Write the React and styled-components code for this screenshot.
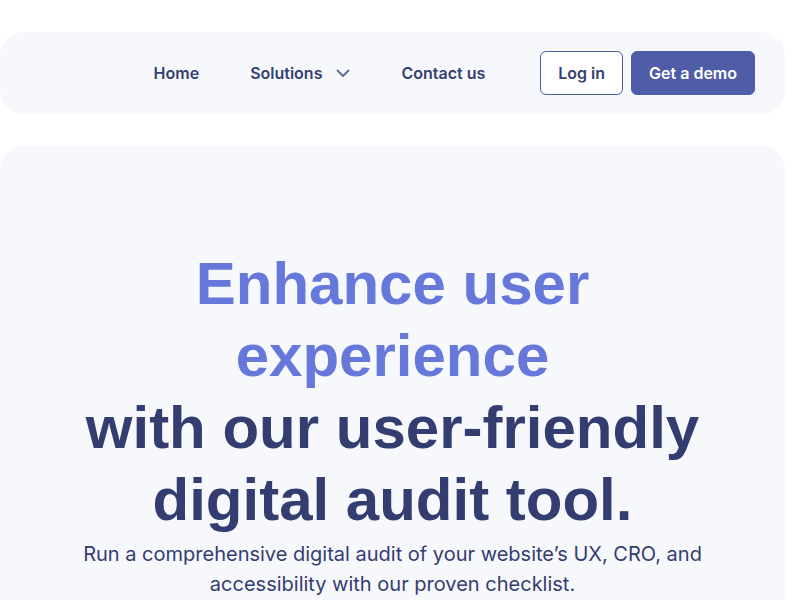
import React from 'react';
import styled, { createGlobalStyle } from 'styled-components';

const GlobalStyle = createGlobalStyle`
  html, body {
    margin: 0;
    padding: 0;
    background: #ffffff;
  }
  body {
    font-family: Inter, "Noto Sans", sans-serif;
    color: #343d70;
  }
  * {
    box-sizing: border-box;
  }
  ::-webkit-scrollbar {
    width: 15px;
    height: 15px;
    background: #f1f1f1;
  }
  ::-webkit-scrollbar-thumb {
    background: #c1c1c1;
    border: 2px solid #f1f1f1;
  }
  ::-webkit-scrollbar-corner {
    background: #dcdcdc;
  }
`;

const Chevron = () => (
  <svg width="14" height="9" viewBox="0 0 14 9" fill="none">
    <path d="M1.5 1.5l5.5 5.5 5.5-5.5" stroke="#5b6591" strokeWidth="1.8" strokeLinecap="round" strokeLinejoin="round" />
  </svg>
);

const App = () => {
  return (
    <>
      <GlobalStyle />
      <Page>
        <NavBar>
          <Links>
            <NavLink href="#">Home</NavLink>
            <NavLink href="#" as="button">
              Solutions
              <Chevron />
            </NavLink>
            <NavLink href="#">Contact us</NavLink>
          </Links>
          <Actions>
            <Button>Log in</Button>
            <Button primary>Get a demo</Button>
          </Actions>
        </NavBar>

        <Hero>
          <Title>
            <Accent>Enhance user experience</Accent>
            <br />
            with our user-friendly digital audit tool.
          </Title>
          <Lead>
            Run a comprehensive digital audit of your website’s UX, CRO, and
            accessibility with our proven checklist.
          </Lead>
        </Hero>
      </Page>
    </>
  );
};

const Page = styled.div`
  width: 805px;
  min-height: 8800px;
  padding: 32px 20px 0 0;
  display: flex;
  flex-direction: column;
  gap: 32px;
`;

const NavBar = styled.nav`
  height: 82px;
  background: #f7f8fc;
  border-radius: 24px;
  display: flex;
  align-items: center;
  justify-content: flex-end;
  padding: 0 30px;
`;

const Links = styled.div`
  display: flex;
  align-items: center;
  gap: 51px;
  margin-right: 55px;
`;

const NavLink = styled.a`
  display: flex;
  align-items: center;
  gap: 14px;
  font-family: Inter, "Noto Sans", sans-serif;
  font-size: 16px;
  font-weight: 600;
  color: #343f72;
  text-decoration: none;
  background: none;
  border: none;
  padding: 0;
  cursor: pointer;
`;

const Actions = styled.div`
  display: flex;
  align-items: center;
  gap: 8px;
`;

const Button = styled.button`
  height: 44px;
  padding: 0 17px;
  border-radius: 6px;
  font-family: Inter, "Noto Sans", sans-serif;
  font-size: 16px;
  font-weight: 600;
  cursor: pointer;
  border: 1px solid #4f5ca8;
  background: ${(p) => (p.primary ? '#4f5ca8' : '#ffffff')};
  color: ${(p) => (p.primary ? '#ffffff' : '#343f72')};
`;

const Hero = styled.section`
  flex: 1;
  background: #f7f8fc;
  border-radius: 24px;
  padding: 102px 40px 0;
  display: flex;
  flex-direction: column;
  align-items: center;
  text-align: center;
`;

const Title = styled.h1`
  margin: 0;
  max-width: 660px;
  font-family: "Liberation Sans", Arial, sans-serif;
  font-size: 60px;
  line-height: 72px;
  font-weight: 700;
  color: #343d70;
`;

const Accent = styled.span`
  color: #6678d9;
`;

const Lead = styled.p`
  margin: 3px 0 0;
  max-width: 640px;
  font-family: Inter, "Noto Sans", sans-serif;
  font-size: 20px;
  line-height: 30px;
  font-weight: 400;
  color: #343d70;
`;

export default App;
